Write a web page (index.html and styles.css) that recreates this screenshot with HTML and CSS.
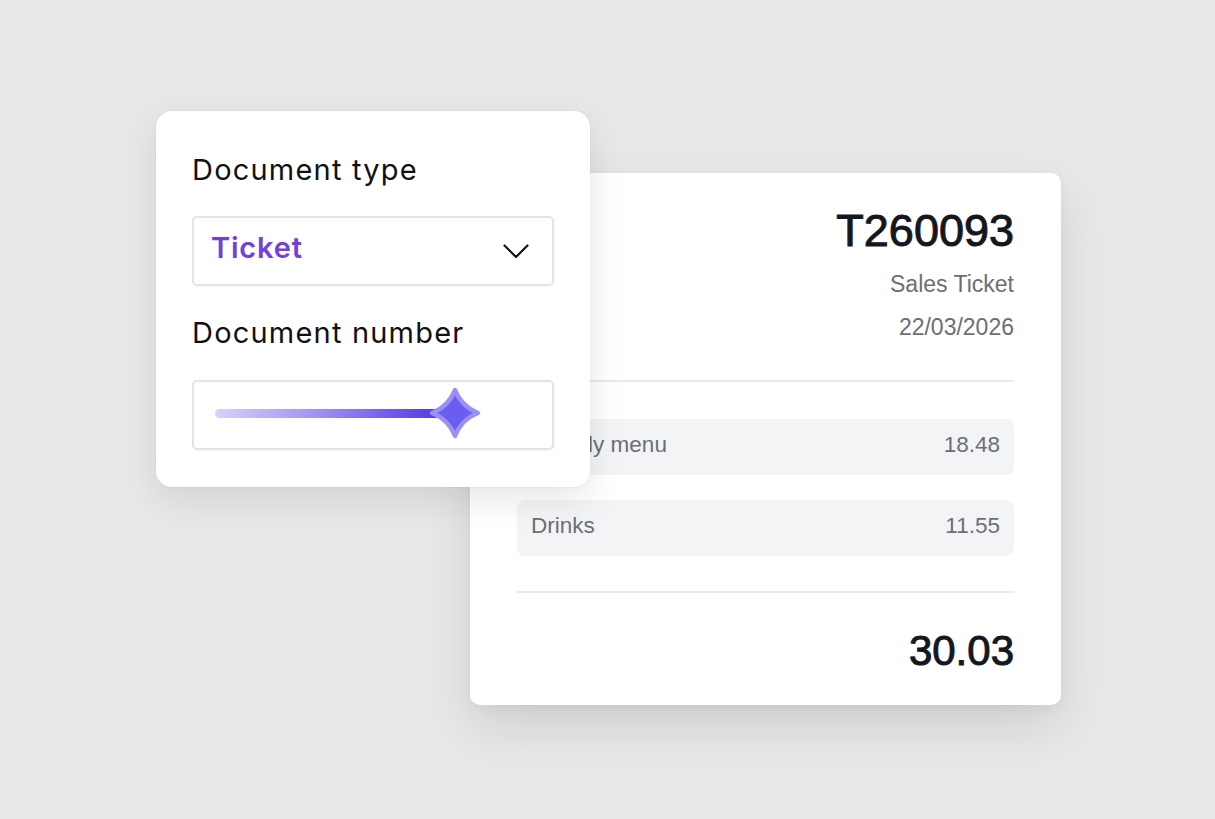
FILE: index.html
```html
<!DOCTYPE html>
<html lang="en">
<head>
    <meta charset="UTF-8">
    <meta name="viewport" content="width=device-width, initial-scale=1.0">
    <title>Document settings</title>
    <link rel="stylesheet" href="styles.css">
</head>
<body>
    <div class="stage">
        <div class="ticket">
            <div class="ticket-number">T260093</div>
            <div class="ticket-meta">Sales Ticket</div>
            <div class="ticket-meta ticket-date">22/03/2026</div>
            <div class="divider"></div>
            <div class="lines">
                <div class="line"><span>Weekly menu</span><span>18.48</span></div>
                <div class="line"><span>Drinks</span><span>11.55</span></div>
            </div>
            <div class="divider divider-total"></div>
            <div class="ticket-total">30.03</div>
        </div>

        <div class="settings">
            <div class="field-label">Document type</div>
            <div class="select">
                <span class="select-value">Ticket</span>
                <svg class="chevron" width="26" height="15" viewBox="0 0 26 15">
                    <polyline points="1.5,1.5 13,13 24.5,1.5" fill="none" stroke="#141414" stroke-width="2.2" stroke-linecap="round" stroke-linejoin="round"/>
                </svg>
            </div>
            <div class="field-label label-number">Document number</div>
            <div class="slider">
                <div class="track"></div>
                <svg class="thumb" width="54" height="54" viewBox="0 0 54 54">
                    <path d="M27 4 Q33.5 20.5 50 27 Q33.5 33.5 27 50 Q20.5 33.5 4 27 Q20.5 20.5 27 4 Z" fill="#6a5ef0" stroke="#9c8ff5" stroke-width="4.5" stroke-linejoin="round"/>
                </svg>
            </div>
        </div>
    </div>
</body>
</html>
```

FILE: styles.css
```css
* {
    box-sizing: border-box;
}
body {
    margin: 0;
    background: #e8e8e7;
    font-family: "Liberation Sans", Arial, sans-serif;
    min-height: 100vh;
}
.stage {
    position: relative;
    width: 1215px;
    height: 819px;
    padding: 173px 0 0 470px;
}
.ticket {
    width: 591px;
    height: 532px;
    background: #fff;
    border-radius: 10px;
    padding: 33px 47px 0;
    box-shadow: 0 22px 50px rgba(0, 0, 0, 0.11), 0 4px 12px rgba(0, 0, 0, 0.04);
    text-align: right;
}
.ticket-number {
    font-size: 45px;
    line-height: 50px;
    color: #15171f;
    -webkit-text-stroke: 1px #15171f;
}
.ticket-meta {
    font-size: 23px;
    line-height: 28px;
    color: #6d6e72;
    margin-top: 14px;
}
.ticket-date {
    margin-top: 15px;
}
.divider {
    height: 2px;
    background: #ebebeb;
    margin-top: 39px;
}
.lines {
    display: flex;
    flex-direction: column;
    gap: 25px;
    margin-top: 37px;
}
.line {
    display: flex;
    justify-content: space-between;
    align-items: center;
    height: 56px;
    padding: 0 14px 4px;
    background: #f3f4f6;
    border-radius: 8px;
    font-size: 22.5px;
    line-height: 26px;
    color: #6b6f77;
}
.divider-total {
    margin-top: 35px;
}
.ticket-total {
    margin-top: 33px;
    font-size: 42px;
    line-height: 50px;
    color: #15171f;
    -webkit-text-stroke: 1px #15171f;
}
.settings {
    position: absolute;
    left: 156px;
    top: 111px;
    width: 434px;
    height: 376px;
    padding: 42px 36px 0;
    background: #fff;
    border-radius: 16px;
    box-shadow: 0 12px 36px rgba(0, 0, 0, 0.10), 0 0 0 1px rgba(0, 0, 0, 0.02);
    font-family: Inter, "Liberation Sans", sans-serif;
}
.field-label {
    font-size: 29px;
    line-height: 34px;
    letter-spacing: 1.2px;
    color: #111;
}
.label-number {
    margin-top: 30px;
}
.select {
    display: flex;
    align-items: center;
    justify-content: space-between;
    height: 70px;
    margin-top: 29px;
    padding: 0 23px 7px 17px;
    border: 2px solid #e4e4e4;
    border-radius: 5px;
    box-shadow: 0 1px 3px rgba(0, 0, 0, 0.04);
}
.select-value {
    font-size: 29px;
    line-height: 34px;
    font-weight: 600;
    letter-spacing: 0.8px;
    color: #7341d8;
}
.chevron {
    margin-top: 7px;
}
.slider {
    display: flex;
    align-items: center;
    height: 70px;
    margin-top: 30px;
    padding: 0 0 4px 21px;
    border: 2px solid #e4e4e4;
    border-radius: 5px;
    box-shadow: 0 1px 3px rgba(0, 0, 0, 0.04);
}
.track {
    width: 242px;
    height: 9px;
    border-radius: 5px;
    background: linear-gradient(90deg, #d8d1fa 0%, #a395f2 40%, #6d58ea 75%, #4a31d4 100%);
}
.thumb {
    margin-left: -29px;
}
```
